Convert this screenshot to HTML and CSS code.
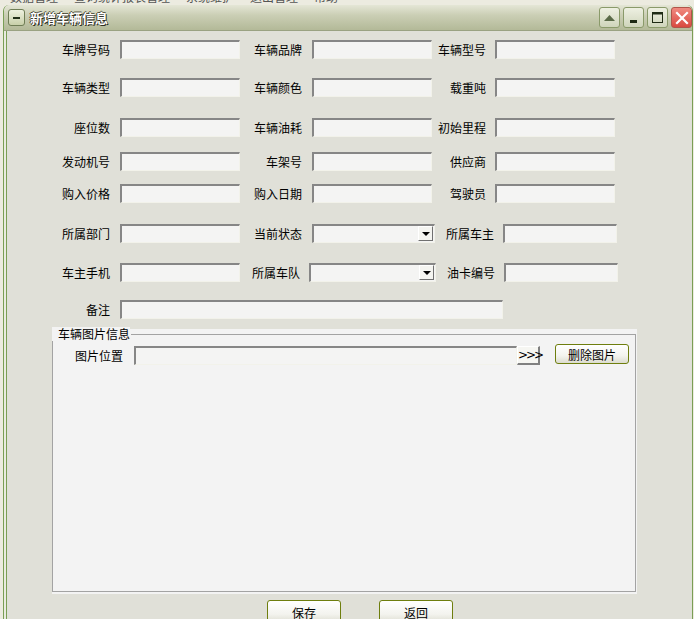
FILE: index.html
```html
<!DOCTYPE html>
<html lang="zh-CN">
<head>
    <meta charset="UTF-8">
    <title>新增车辆信息</title>
    <link rel="stylesheet" href="styles.css">
</head>
<body>
    <div class="menubar">
        <div class="menu-text">
            <span>数据管理</span><span>查询统计报表管理</span><span>系统维护</span><span>退出管理</span><span>帮助</span>
        </div>
    </div>

    <div class="window">
        <div class="titlebar">
            <div class="sys-btn"><span class="dash"></span></div>
            <div class="title">新增车辆信息</div>
            <div class="ctrls">
                <div class="ctrl">
                    <svg width="13" height="8" viewBox="0 0 13 8"><polygon points="1,7 6.5,1 12,7" fill="#5a6a48"/></svg>
                </div>
                <div class="ctrl">
                    <svg width="13" height="13" viewBox="0 0 13 13"><rect x="3" y="9" width="7" height="3" fill="#1e2a14"/></svg>
                </div>
                <div class="ctrl">
                    <svg width="13" height="13" viewBox="0 0 13 13"><rect x="1.5" y="1.5" width="10" height="10" fill="none" stroke="#1e2a14" stroke-width="1"/><rect x="1" y="1" width="11" height="2.5" fill="#1e2a14"/></svg>
                </div>
                <div class="ctrl close">
                    <svg width="14" height="14" viewBox="0 0 14 14"><path d="M2 2 L12 12 M12 2 L2 12" stroke="#fff" stroke-width="2.2" stroke-linecap="square"/></svg>
                </div>
            </div>
        </div>

        <div class="client">
            <div class="row r1">
                <label class="lab1">车牌号码</label><span class="field"></span>
                <label class="lab2">车辆品牌</label><span class="field"></span>
                <label class="lab3">车辆型号</label><span class="field"></span>
            </div>
            <div class="row r2">
                <label class="lab1">车辆类型</label><span class="field"></span>
                <label class="lab2">车辆颜色</label><span class="field"></span>
                <label class="lab3">载重吨</label><span class="field"></span>
            </div>
            <div class="row r3">
                <label class="lab1">座位数</label><span class="field"></span>
                <label class="lab2">车辆油耗</label><span class="field"></span>
                <label class="lab3">初始里程</label><span class="field"></span>
            </div>
            <div class="row r4">
                <label class="lab1">发动机号</label><span class="field"></span>
                <label class="lab2">车架号</label><span class="field"></span>
                <label class="lab3">供应商</label><span class="field"></span>
            </div>
            <div class="row r5">
                <label class="lab1">购入价格</label><span class="field"></span>
                <label class="lab2">购入日期</label><span class="field"></span>
                <label class="lab3">驾驶员</label><span class="field"></span>
            </div>
            <div class="row r6">
                <label class="lab1">所属部门</label><span class="field"></span>
                <label class="lab2">当前状态</label><span class="field combo"><span class="drop"></span></span>
                <label class="lab3 wide">所属车主</label><span class="field short"></span>
            </div>
            <div class="row r7">
                <label class="lab1">车主手机</label><span class="field"></span>
                <label class="lab2 tight">所属车队</label><span class="field combo long"><span class="drop"></span></span>
                <label class="lab3 wide">油卡编号</label><span class="field short"></span>
            </div>
            <div class="row r8">
                <label class="lab1">备注</label><span class="field memo"></span>
            </div>

            <div class="group">
                <fieldset>
                    <legend>车辆图片信息</legend>
                    <div class="pic-row">
                        <label class="pic-lab">图片位置</label>
                        <span class="field path"></span>
                        <span class="browse">&gt;&gt;&gt;</span>
                        <button class="btn del">删除图片</button>
                    </div>
                </fieldset>
            </div>

            <div class="actions">
                <button class="btn">保存</button>
                <button class="btn">返回</button>
            </div>
        </div>
    </div>
</body>
</html>
```

FILE: styles.css
```css
body {
    margin: 0;
    width: 694px;
    height: 619px;
    overflow: hidden;
    background: #ecebe0;
    font-family: "Noto Sans CJK SC", "DejaVu Sans", sans-serif;
    font-size: 12px;
    color: #000;
}

.menubar { height: 5px; overflow: hidden; background: #ecebe0; }
.menu-text { margin-top: -10px; margin-left: 10px; line-height: 14px; color: #555; white-space: nowrap; }
.menu-text span { margin-right: 16px; }

.window {
    box-sizing: border-box;
    margin-left: 3px;
    width: 690px;
    height: 614px;
    overflow: hidden;
    border-left: 1px solid #7a9e55;
    border-right: 1px solid #7a9e55;
    border-radius: 6px 6px 0 0;
    background: #e9eadf;
}

.titlebar {
    height: 25px;
    display: flex;
    align-items: center;
    border-radius: 6px 6px 0 0;
    background: linear-gradient(#e4e6d6 0%, #cbcfb5 40%, #b3b998 100%);
    border-bottom: 1px solid #9aa282;
}
.sys-btn {
    width: 15px;
    height: 15px;
    margin-left: 4px;
    border: 1px solid #6f7d55;
    border-radius: 3px;
    background: linear-gradient(#eef1df, #c8d0aa);
    display: flex;
    align-items: center;
    justify-content: center;
}
.sys-btn .dash { width: 7px; height: 2px; background: #233019; }
.title {
    margin-left: 5px;
    color: #fff;
    font-size: 13px;
    font-weight: bold;
    text-shadow: 1px 1px 0 #2e2e22, -1px 0 0 #3a3a2c, 0 -1px 0 #5a5a48;
}
.ctrls { margin-left: auto; display: flex; gap: 3px; }
.ctrl {
    width: 19px;
    height: 19px;
    border: 1px solid #8a9a6a;
    border-radius: 3px;
    background: linear-gradient(#eef0e2, #cfd5bb);
    display: flex;
    align-items: center;
    justify-content: center;
}
.ctrl.close { background: linear-gradient(#f08a80, #d94a40); border-color: #b0554a; }

.client {
    box-sizing: border-box;
    margin-left: 2px;
    height: 588px;
    overflow: hidden;
    border-left: 1px solid #7a9e55;
    background: #e0e0d8;
    padding-top: 9px;
}

.row { display: flex; align-items: center; height: 19px; }
.r2 { margin-top: 19px; }
.r3 { margin-top: 21px; }
.r4 { margin-top: 15px; }
.r5 { margin-top: 13px; }
.r6 { margin-top: 21px; }
.r7 { margin-top: 20px; }
.r8 { margin-top: 18px; }

.row label { text-align: right; white-space: nowrap; }
.lab1 { width: 103px; margin-right: 10px; }
.lab2 { width: 62px; margin-right: 10px; }
.lab2.tight { width: 60px; margin-right: 9px; }
.lab3 { width: 54px; margin-right: 9px; }
.lab3.wide { width: 59px; margin-right: 9px; }

.field {
    box-sizing: border-box;
    display: block;
    width: 120px;
    height: 19px;
    background: #f4f4f3;
    border-top: 2px solid #868686;
    border-left: 2px solid #868686;
    border-bottom: 1px solid #f2f2ea;
    border-right: 1px solid #f2f2ea;
    position: relative;
}
.field.short { width: 114px; }
.field.combo { width: 123px; }
.field.combo.long { width: 127px; }
.field.memo { width: 383px; }

.drop {
    position: absolute;
    right: 1px;
    top: 0;
    width: 15px;
    height: 15px;
    box-sizing: border-box;
    background: #f4f4f0;
    border-top: 1px solid #fff;
    border-left: 1px solid #fff;
    border-right: 1px solid #707070;
    border-bottom: 1px solid #707070;
}
.drop::after {
    content: "";
    position: absolute;
    left: 3px;
    top: 5px;
    border-left: 4px solid transparent;
    border-right: 4px solid transparent;
    border-top: 4px solid #000;
}

.group {
    margin: 10px 0 0 45px;
    width: 585px;
    height: 265px;
    background: #f3f3f3;
    padding-top: 5px;
    box-sizing: border-box;
}
.group fieldset {
    margin: 0;
    padding: 0;
    height: 258px;
    box-sizing: border-box;
    width: 584px;
    border: 1px solid #a3a3a3;
    border-top: none;
    position: relative;
}
.group fieldset::before {
    content: "";
    position: absolute;
    left: 78px;
    right: -1px;
    top: 0;
    border-top: 1px solid #a3a3a3;
}
.group legend {
    padding: 0 0 0 6px;
    margin-left: -1px;
    line-height: 14px;
    margin-top: -7px;
    float: left;
    background: #f3f3f3;
}
.pic-row {
    clear: both;
    display: flex;
    align-items: center;
    padding-top: 4px;
}
.pic-lab { width: 70px; text-align: right; margin-right: 11px; }
.field.path { width: 383px; }
.browse {
    box-sizing: border-box;
    width: 23px;
    height: 19px;
    margin-top: 1px;
    background: #f6f6f2;
    border-top: 1px solid #fff;
    border-left: 1px solid #fff;
    border-right: 2px solid #808080;
    border-bottom: 2px solid #808080;
    font-family: "DejaVu Sans", sans-serif;
    font-size: 12px;
    line-height: 16px;
    text-align: center;
    letter-spacing: -2px;
}

.btn {
    box-sizing: border-box;
    width: 74px;
    height: 20px;
    padding: 0;
    font-family: inherit;
    font-size: 12px;
    color: #000;
    border: 1px solid #6e7e0e;
    border-radius: 3px;
    background: linear-gradient(#ffffff 0%, #f3f3ee 60%, #dcdccf 100%);
}
.btn.del { margin-left: 15px; margin-top: -2px; }

.actions {
    display: flex;
    gap: 38px;
    margin: 6px 0 0 260px;
}
.actions .btn { height: 24px; }
```
